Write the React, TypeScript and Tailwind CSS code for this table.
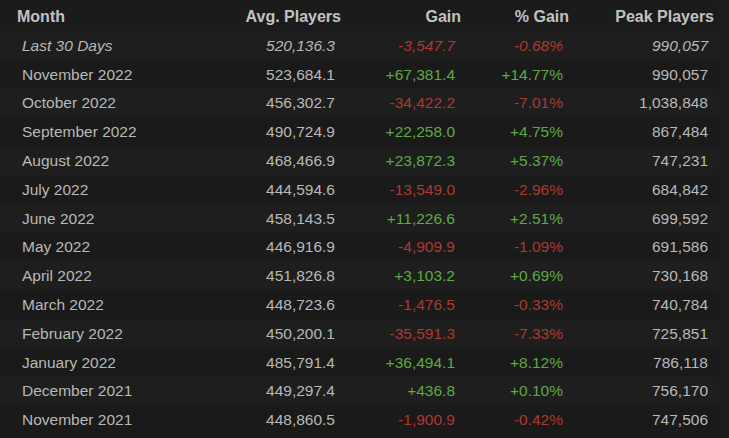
import React from 'react';

type Row = {
  month: string;
  avg: string;
  gain: string;
  pct: string;
  peak: string;
  italic?: boolean;
};

const rows: Row[] = [
  { month: 'Last 30 Days', avg: '520,136.3', gain: '-3,547.7', pct: '-0.68%', peak: '990,057', italic: true },
  { month: 'November 2022', avg: '523,684.1', gain: '+67,381.4', pct: '+14.77%', peak: '990,057' },
  { month: 'October 2022', avg: '456,302.7', gain: '-34,422.2', pct: '-7.01%', peak: '1,038,848' },
  { month: 'September 2022', avg: '490,724.9', gain: '+22,258.0', pct: '+4.75%', peak: '867,484' },
  { month: 'August 2022', avg: '468,466.9', gain: '+23,872.3', pct: '+5.37%', peak: '747,231' },
  { month: 'July 2022', avg: '444,594.6', gain: '-13,549.0', pct: '-2.96%', peak: '684,842' },
  { month: 'June 2022', avg: '458,143.5', gain: '+11,226.6', pct: '+2.51%', peak: '699,592' },
  { month: 'May 2022', avg: '446,916.9', gain: '-4,909.9', pct: '-1.09%', peak: '691,586' },
  { month: 'April 2022', avg: '451,826.8', gain: '+3,103.2', pct: '+0.69%', peak: '730,168' },
  { month: 'March 2022', avg: '448,723.6', gain: '-1,476.5', pct: '-0.33%', peak: '740,784' },
  { month: 'February 2022', avg: '450,200.1', gain: '-35,591.3', pct: '-7.33%', peak: '725,851' },
  { month: 'January 2022', avg: '485,791.4', gain: '+36,494.1', pct: '+8.12%', peak: '786,118' },
  { month: 'December 2021', avg: '449,297.4', gain: '+436.8', pct: '+0.10%', peak: '756,170' },
  { month: 'November 2021', avg: '448,860.5', gain: '-1,900.9', pct: '-0.42%', peak: '747,506' },
];

const cols = 'grid grid-cols-[220px_121px_120px_108px_145px]';

export default function App() {
  return (
    <div
      className="w-[729px] h-[438px] overflow-hidden bg-[#1b1b1b] flex"
      style={{ fontFamily: '"Liberation Sans", Arial, sans-serif' }}
    >
      <div className="w-[718px] flex flex-col">
        {/* header */}
        <div className={`${cols} h-[31px] items-center text-[16px] font-bold text-[#c2c2c2] bg-[#1b1b1b] pt-[3px]`}>
          <div className="pl-[17px]">Month</div>
          <div className="text-right">Avg. Players</div>
          <div className="text-right">Gain</div>
          <div className="text-right">% Gain</div>
          <div className="text-right">Peak Players</div>
        </div>

        {rows.map((r, idx) => {
          const up = r.gain.startsWith('+');
          const tone = up ? 'text-[#5ea845]' : 'text-[#a93b32]';
          return (
            <div
              key={idx}
              className={`${cols} h-[28.8px] items-center text-[15.5px] text-[#b8b8b8] ${
                idx % 2 === 0 ? 'bg-[#1e1e1e]' : 'bg-[#1a1a1a]'
              } ${r.italic ? 'italic' : ''}`}
            >
              <div className="pl-[22px]">{r.month}</div>
              <div className="text-right pr-[6px]">{r.avg}</div>
              <div className={`text-right pr-[6px] ${tone}`}>{r.gain}</div>
              <div className={`text-right pr-[6px] ${tone}`}>{r.pct}</div>
              <div className="text-right pr-[6px]">{r.peak}</div>
            </div>
          );
        })}
      </div>
      <div className="flex-1 bg-[#1c1c1c]" />
    </div>
  );
}
